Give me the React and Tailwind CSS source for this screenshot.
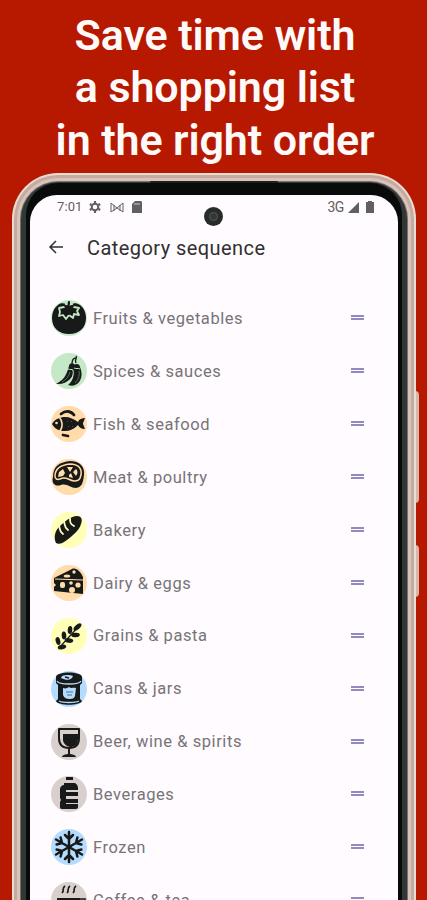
const INK = '#181919';

function TomatoIcon() {
  return (
    <>
      <path d="M7 5C3 8 1 13 1 18c0 10 7 16 17 16s17-6 17-16c0-5-2-10-6-13-3-2-6-2-8-1h-6C12 3 9 3 7 5Z" fill={INK} />
      <path d="m8 8 5-1 2-3 3 1 3-1 2 3 5 1-2 3 2 4-5-1-1 4-4-3-3 4-3-4-4 1 1-4Z" fill={INK} stroke="#c5e9c7" strokeWidth="1.8" strokeLinejoin="round" />
      <path d="M18 9 13 5M18 9l5-4M17 9l1-7M18 9l-6 3M18 9l6 3M18 9v5" fill="none" stroke={INK} strokeWidth="2.2" strokeLinecap="round" />
    </>
  );
}

function PepperIcon() {
  return (
    <>
      <path d="M21 11c0-3 1-6 4-6M25 10c-2-4 2-5 0-7" fill="none" stroke={INK} strokeWidth="1.3" />
      <path d="M18 13c0-3 4-4 6-1l-1 5c0 6-6 15-18 14 7-4 10-7 13-18Z" fill={INK} />
      <path d="M23 12c2-2 6-1 6 2 3 7 2 15-5 18-2 1-4 1-7 0 5-4 6-9 5-15Z" fill={INK} />
      <path d="M17 16c2 1 4 0 5 1m1-2c2 1 4 0 6 1M22 17c1 5-1 9-4 13" fill="none" stroke="#c5e9c7" strokeWidth="1" />
      <path d="M19 19c-1 4-4 8-8 10M28 18c1 5-1 9-4 12" fill="none" stroke="#738273" strokeWidth=".8" />
    </>
  );
}

function FishIcon() {
  return (
    <>
      <path d="M1 18c3-5 8-7 13-7 5 0 9 2 13 5 1-3 4-4 7-4-1 3-2 4-2 6l2 5c-4 0-6-2-7-4-4 4-8 6-13 6-6 0-10-2-13-7Z" fill={INK} />
      <path d="M10 8c5-4 10-3 13 1M12 29l5 1" fill="none" stroke={INK} strokeWidth="2.8" strokeLinecap="round" />
      <path d="M8 11c4 4 4 10 1 14" fill="none" stroke="#ffdcaa" strokeWidth="1.6" />
      <circle cx="5.5" cy="17" r="1.3" fill="#ffdcaa" />
      <path d="m16 15 1 1m3-1 1 1m-4 4 1 1m3-1 1 1" stroke="#4c524c" />
    </>
  );
}

function MeatIcon() {
  return (
    <>
      <path d="M2 18C2 7 9 3 19 2c10 0 15 6 14 14-1 8-2 12-8 13-6 0-9-5-15-3-5 2-10-1-8-8Z" fill={INK} />
      <path d="M4 17C4 9 10 6 19 5c9 0 12 5 11 11-1 5-3 6-7 6-6-1-8-5-14-2-3 1-5 0-5-3Z" fill="none" stroke="#ffdcaa" strokeWidth="1.5" />
      <path d="m8 13 4-3 2 4-2 3-5 1Zm8-5h6l-3 5Zm9 2c2 2 2 4 0 7l-3-4Zm-7 6 2-2 2 5-4-1Z" fill="#ffdcaa" />
    </>
  );
}

function BreadIcon() {
  return (
    <>
      <path d="M5 31C3 27 3 20 8 15 14 9 20 4 26 4c4 0 6 3 4 8-2 7-8 11-14 16-4 3-8 5-11 3Z" fill={INK} />
      <path d="M8 13c1 4 0 6 4 9M13 9c1 4 0 6 4 9M19 6c0 4 0 6 4 8" fill="none" stroke="#ffffb8" strokeWidth="1.8" strokeLinecap="round" />
    </>
  );
}

function CheeseIcon() {
  return (
    <>
      <path d="M3 13 21 4c4-2 9 3 11 8v17L3 26v-4l2-2-2-2Z" fill={INK} />
      <path d="m4 14 28 1" stroke="#ffdcaa" strokeWidth="1.2" />
      <g fill="#ffdcaa">
        <circle cx="23" cy="7" r="1.7" />
        <ellipse cx="16" cy="11" rx="3.3" ry="1.6" />
        <rect x="9" y="17" width="5" height="6" rx="2" />
        <circle cx="20" cy="18" r="1.8" />
        <circle cx="27" cy="20" r="2.6" />
        <circle cx="21" cy="25" r="3" />
      </g>
    </>
  );
}

function GrainIcon() {
  return (
    <>
      <path d="M8 30 27 9" stroke={INK} strokeWidth="1.2" />
      <g fill={INK}>
        <ellipse cx="26.5" cy="9" rx="2.3" ry="4.8" transform="rotate(48 26.5 9)" />
        <ellipse cx="19" cy="12" rx="2.3" ry="4" transform="rotate(5 19 12)" />
        <ellipse cx="13" cy="17.5" rx="2.3" ry="4" transform="rotate(-5 13 17.5)" />
        <ellipse cx="7" cy="23" rx="2.3" ry="4" transform="rotate(-15 7 23)" />
        <ellipse cx="24.5" cy="17" rx="4.3" ry="2.2" transform="rotate(-5 24.5 17)" />
        <ellipse cx="18" cy="22.5" rx="4.3" ry="2.3" transform="rotate(8 18 22.5)" />
        <ellipse cx="11" cy="29" rx="4.3" ry="2.4" transform="rotate(-12 11 29)" />
      </g>
    </>
  );
}

function CanIcon() {
  return (
    <>
      <path d="M5 6c0-6 26-6 26 0v6l-2 2v14l2 2c-2 5-24 5-26 0l2-2V14l-2-2Z" fill={INK} />
      <path d="M6 10c2 4 22 4 24 0M8 30c4 2 16 2 20 0" fill="none" stroke="#b4dcff" strokeWidth="1.3" />
      <path d="M10 7c1-4 9-3 12-2-1 4-6 5-12 2Z" fill="#b4dcff" />
      <path d="m14 6 4 1" stroke={INK} strokeWidth="1.5" />
      <path d="M12 17c3 1 4 0 6-1 3 2 4 0 7 1l-1 8c-1 3-4 3-6 3s-5-1-6-4Z" fill="#b4dcff" />
      <path d="M15 21h7m-6 3h5" stroke="#53758c" strokeWidth="1" />
    </>
  );
}

function WineIcon() {
  return (
    <>
      <path d="M8 5h20v9c0 7-3 10-10 10S8 21 8 14ZM18 24v7" fill="none" stroke={INK} strokeWidth="2" strokeLinejoin="round" />
      <path d="M12 10h15v5c0 6-4 8-8 8-4-1-7-4-7-7ZM11 33c0-2 4-3 7-3s7 1 7 3Z" fill={INK} />
    </>
  );
}

function BottleIcon() {
  return (
    <>
      <path d="M15 1h7v3h-7Z" fill={INK} />
      <path d="M13 7h10c2 0 4 2 4 5v2H15v2h12v4H15v3h12v4H15v1h12v3c0 1-1 2-2 2H11c-2 0-2-1-2-3v-4l1-2-1-2v-9c0-2 2-4 4-4Z" fill={INK} />
    </>
  );
}

function SnowIcon() {
  const arm = 'M18 18V3M18 10l-4-4M18 10l4-4';
  return (
    <g fill="none" stroke={INK} strokeWidth="2.5" strokeLinecap="round">
      <path d={arm} />
      <path d={arm} transform="rotate(60 18 18)" />
      <path d={arm} transform="rotate(120 18 18)" />
      <path d={arm} transform="rotate(180 18 18)" />
      <path d={arm} transform="rotate(240 18 18)" />
      <path d={arm} transform="rotate(300 18 18)" />
    </g>
  );
}

function CoffeeIcon() {
  return (
    <>
      <path d="M14 4c-4 3 0 4-3 7M19 4c-4 3 0 4-3 7M25 4c-4 3 0 4-3 7" fill="none" stroke={INK} strokeWidth="1.7" />
      <path d="M6 16h23v10c0 6-5 8-11 8-7 0-12-3-12-8Z" fill={INK} />
      <path d="M28 17h6v7h-6" fill="none" stroke={INK} strokeWidth="1.5" />
    </>
  );
}

const categories = [
  { name: 'Fruits & vegetables', bg: 'bg-[#c5e9c7]', Icon: TomatoIcon },
  { name: 'Spices & sauces', bg: 'bg-[#c5e9c7]', Icon: PepperIcon },
  { name: 'Fish & seafood', bg: 'bg-[#ffdcaa]', Icon: FishIcon },
  { name: 'Meat & poultry', bg: 'bg-[#ffdcaa]', Icon: MeatIcon },
  { name: 'Bakery', bg: 'bg-[#ffffb8]', Icon: BreadIcon },
  { name: 'Dairy & eggs', bg: 'bg-[#ffdcaa]', Icon: CheeseIcon },
  { name: 'Grains & pasta', bg: 'bg-[#ffffb8]', Icon: GrainIcon },
  { name: 'Cans & jars', bg: 'bg-[#b4dcff]', Icon: CanIcon },
  { name: 'Beer, wine & spirits', bg: 'bg-[#d9d0cd]', Icon: WineIcon },
  { name: 'Beverages', bg: 'bg-[#d9d0cd]', Icon: BottleIcon },
  { name: 'Frozen', bg: 'bg-[#b4dcff]', Icon: SnowIcon },
  { name: 'Coffee & tea', bg: 'bg-[#d9d0cd]', Icon: CoffeeIcon }
];

function StatusBar() {
  return (
    <div className="flex h-6 items-center pl-[27px] pr-[24px] text-[#606060]">
      <span className="w-[31px] text-[13px] tracking-[0.1px]">7:01</span>
      <svg className="ml-px h-3 w-3" viewBox="0 0 12 12" fill="none" stroke="currentColor">
        <circle cx="6" cy="6" r="3.3" strokeWidth="2" />
        <path d="M6 0v2M6 10v2M.8 3l1.7 1M9.5 8l1.7 1M.8 9l1.7-1M9.5 4l1.7-1" strokeWidth="2.2" />
      </svg>
      <svg className="ml-[9px] h-[11px] w-[14px]" viewBox="0 0 14 11" fill="none" stroke="currentColor" strokeWidth="1">
        <path d="M1 10V1l6 5 6-5v9L7 6ZM4 9V3M10 9V3" />
      </svg>
      <svg className="ml-[8px] h-3 w-[10px]" viewBox="0 0 10 12">
        <path d="M3 0h6l1 1v11H0V3Z" fill="currentColor" />
        <path d="M3 2v2m2-2v2m2-2v2" stroke="#fffbff" strokeWidth=".7" />
      </svg>
      <span className="ml-auto text-[14px] tracking-[-0.4px]">3G</span>
      <svg className="ml-[4px] h-[11px] w-[11px]" viewBox="0 0 11 11">
        <path d="M11 0v11H0Z" fill="currentColor" />
      </svg>
      <svg className="ml-[7px] h-3 w-2" viewBox="0 0 8 12">
        <path d="M2 0h4v1h2v11H0V1h2Z" fill="currentColor" />
      </svg>
    </div>
  );
}

export default function App() {
  return (
    <main className="relative h-[900px] w-[427px] overflow-hidden bg-[#b71900] font-[Roboto,sans-serif]">
      <h1 className="h-[173px] whitespace-nowrap pl-[3px] pt-[9px] text-center text-[43px] font-semibold leading-[52.4px] tracking-[-0.1px] text-[#fffafa]">
        Save time with
        <br />a shopping list
        <br />in the right order
      </h1>

      <div className="absolute left-[415px] top-[391px] h-[112px] w-[4px] rounded-r-sm bg-[#d5b9ad]" />
      <div className="absolute left-[415px] top-[545px] h-[52px] w-[4px] rounded-r-sm bg-[#d5b9ad]" />

      <section className="relative ml-[12px] h-[780px] w-[404px] rounded-t-[46px] bg-[#eadbd3] p-[2px]">
        <div className="h-full rounded-t-[44px] bg-[#c5aaa0] p-[3px]">
          <div className="h-full rounded-t-[41px] bg-[#d9c3b9] p-[3px]">
            <div className="h-full rounded-t-[38px] bg-[#76726e] p-px">
              <div className="h-full rounded-t-[37px] bg-[#303735] px-[5px] pt-px">
                <div className="h-full rounded-t-[32px] bg-[#080b0a] px-[4px] pt-[12px]">
                  <div className="h-full overflow-hidden rounded-t-[27px] bg-[#fffbff]">
                    <StatusBar />
                    <header className="flex h-[58px] items-center pl-[18px] text-[#303030]">
                      <svg className="-mt-[2px] h-4 w-4" viewBox="0 0 16 16" fill="none" stroke="currentColor" strokeWidth="1.5">
                        <path d="M15 8H2M8 2 2 8l6 6" />
                      </svg>
                      <h2 className="ml-[23px] text-[20px] tracking-[0.43px]">Category sequence</h2>
                    </header>
                    <ul className="pt-[15px]">
                      {categories.map(({ name, bg, Icon }) => (
                        <li key={name} className="flex h-[52.9px] items-center pl-[21px] pr-[34px]">
                          <span className={`h-9 w-9 shrink-0 rounded-full ${bg}`}>
                            <svg className="h-9 w-9" viewBox="0 0 36 36">
                              <Icon />
                            </svg>
                          </span>
                          <span className="ml-[6px] pt-[2px] text-[16.5px] tracking-[0.56px] text-[#777477]">{name}</span>
                          <span className="mb-px ml-auto h-[5px] w-[13px] border-y-2 border-[#938abf]" />
                        </li>
                      ))}
                    </ul>
                  </div>
                </div>
              </div>
            </div>
          </div>
        </div>
      </section>

      <div className="absolute left-[150px] top-[181px] h-[2px] w-[128px] rounded bg-[#201d1c]" />
      <div className="absolute left-[204px] top-[207px] flex h-[19px] w-[19px] items-center justify-center rounded-full bg-[#292b2b]">
        <div className="h-[9px] w-[9px] rounded-full border border-[#555858] bg-[#333737]" />
      </div>
    </main>
  );
}
